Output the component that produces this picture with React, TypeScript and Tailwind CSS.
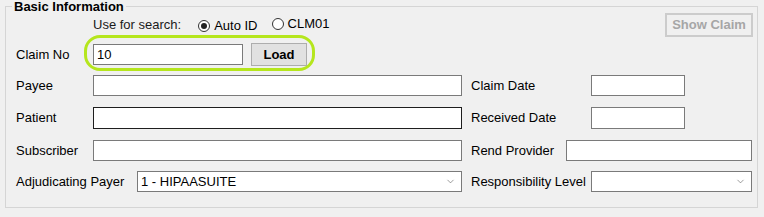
import { ChevronDown } from "lucide-react";

function TextBox({ w, value = "", dark = false }: { w: string; value?: string; dark?: boolean }) {
  return (
    <div
      className={`${w} h-full bg-white border ${dark ? "border-[#1e1e1e]" : "border-[#7a7a7a]"} flex items-center px-[3px] text-[13px]`}
    >
      {value}
    </div>
  );
}

function Combo({ w, value = "" }: { w: string; value?: string }) {
  return (
    <div className={`${w} h-full bg-white border border-[#7a7a7a] flex items-center pl-[3px] pr-[5px] text-[13px]`}>
      <span className="flex-1">{value}</span>
      <ChevronDown size={11} strokeWidth={1.25} className="text-[#555]" />
    </div>
  );
}

function Radio({ checked, label }: { checked: boolean; label: string }) {
  return (
    <span className="inline-flex items-center gap-[4px]">
      <span className="w-[12px] h-[12px] rounded-full border border-[#333] bg-white flex items-center justify-center">
        {checked && <span className="w-[6px] h-[6px] rounded-full bg-[#222]" />}
      </span>
      {label}
    </span>
  );
}

export default function App() {
  return (
    <div
      className="w-[764px] h-[217px] bg-[#f0f0f0] text-black pl-[5px]"
      style={{ fontFamily: '"Liberation Sans", Arial, sans-serif' }}
    >
      <fieldset className="w-[753px] h-[208px] border border-[#d5d5d5] pl-[10px] pr-[4px]">
        <legend className="-ml-[4px] px-[2px] text-[13px] font-bold leading-[13px]">Basic Information</legend>

        <div className="h-[24px] flex items-center text-[13px]">
          <span className="ml-[77px] text-[#1a1a1a]">Use for search:</span>
          <span className="ml-[17px]"><Radio checked label="Auto ID" /></span>
          <span className="ml-[14px]"><Radio checked={false} label="CLM01" /></span>
          <button className="ml-auto w-[88px] h-full border-2 border-[#cccccc] bg-[#f0f0f0] text-[#a6a6a6] font-bold text-[13px]">
            Show Claim
          </button>
        </div>

        <div className="relative mt-[6px] h-[23px] flex items-center text-[13px]">
          <span className="w-[77px]">Claim No</span>
          <div className="h-[21px]"><TextBox w="w-[150px]" value="10" /></div>
          <button className="ml-[8px] w-[56px] h-full border border-[#adadad] bg-[#e1e1e1] font-bold text-[13px]">
            Load
          </button>
          <span className="absolute left-[68px] top-[-8px] w-[231px] h-[36px] border-[3px] border-[#b5e61d] rounded-[16px]" />
        </div>

        <div className="mt-[9px] h-[21px] flex items-center text-[13px]">
          <span className="w-[77px]">Payee</span>
          <TextBox w="w-[369px]" />
          <span className="ml-[9px] w-[120px]">Claim Date</span>
          <TextBox w="w-[94px]" />
        </div>

        <div className="mt-[11px] h-[22px] flex items-center text-[13px]">
          <span className="w-[77px]">Patient</span>
          <TextBox w="w-[369px]" dark />
          <span className="ml-[9px] w-[120px]">Received Date</span>
          <TextBox w="w-[94px]" />
        </div>

        <div className="mt-[11px] h-[21px] flex items-center text-[13px]">
          <span className="w-[77px]">Subscriber</span>
          <TextBox w="w-[369px]" />
          <span className="ml-[9px] w-[95px]">Rend Provider</span>
          <TextBox w="w-[186px]" />
        </div>

        <div className="mt-[10px] h-[21px] flex items-center text-[13px]">
          <span className="w-[121px]">Adjudicating Payer</span>
          <Combo w="w-[325px]" value="1 - HIPAASUITE" />
          <span className="ml-[9px] w-[120px]">Responsibility Level</span>
          <Combo w="w-[161px]" />
        </div>
      </fieldset>
    </div>
  );
}
